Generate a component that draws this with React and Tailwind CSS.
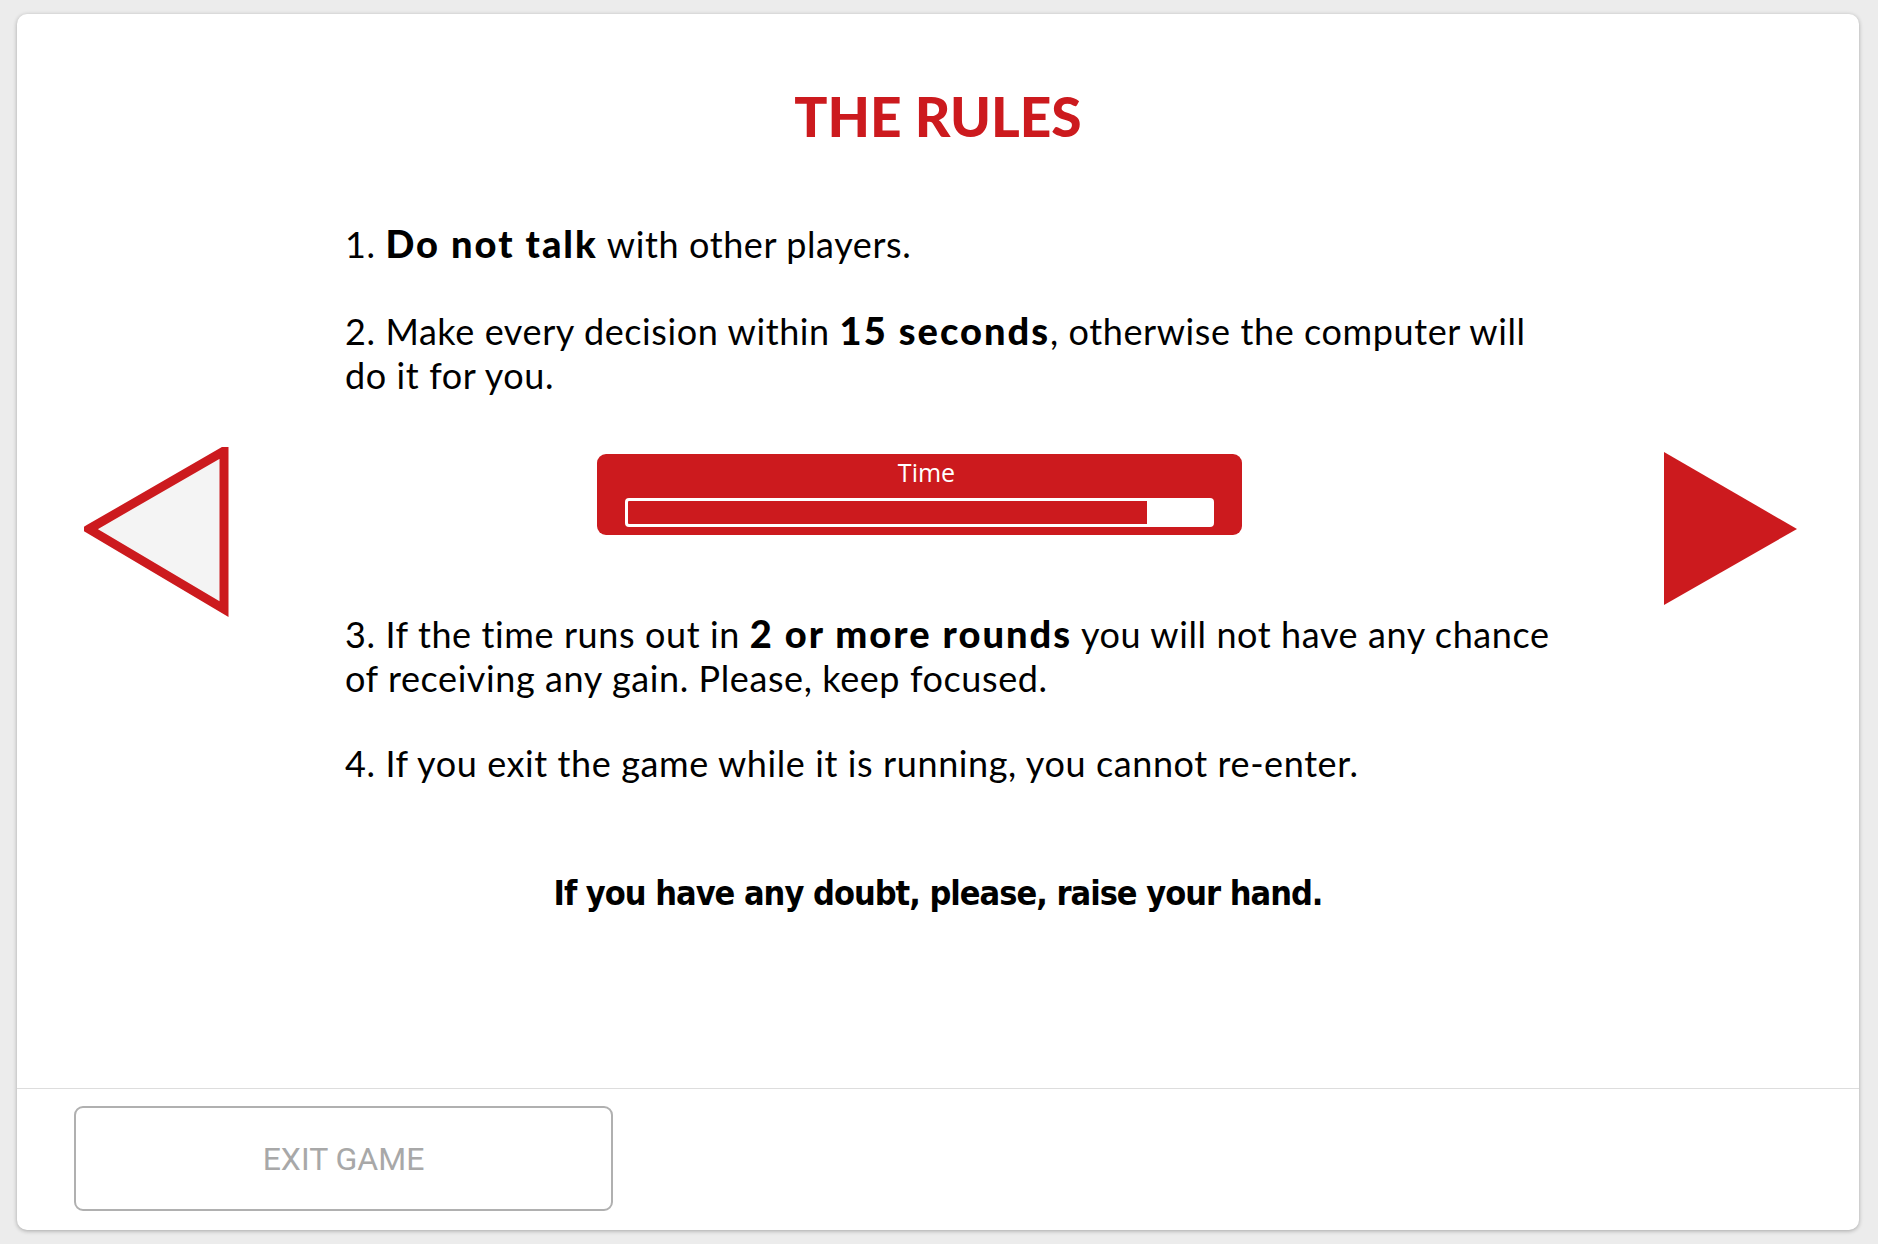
import React from 'react';

const RED = '#cc1a1e';

const LeftArrow = () => (
  <svg width="148" height="170" viewBox="0 0 148 170">
    <polygon points="5,82 140,4 140,162" fill="#f4f4f4" stroke={RED} strokeWidth="9" strokeLinejoin="miter" />
  </svg>
);

const RightArrow = () => (
  <svg width="134" height="154" viewBox="0 0 134 154">
    <polygon points="0,0 133,77 0,153" fill={RED} />
  </svg>
);

const TimeBox = ({ progress }) => (
  <div className="ml-[252px] w-[645px] h-[81px] rounded-[9px] bg-[#cc1a1e] px-[28px] pt-[5px]">
    <div className="text-center text-white text-[25px] leading-[26px] pl-[14px] tracking-normal font-['Open_Sans',sans-serif]">
      Time
    </div>
    <div className="mt-[13px] h-[29px] rounded-[4px] border-[3px] border-white bg-white">
      <div className="h-full bg-[#cc1a1e] rounded-l-[1px]" style={{ width: `${progress}%` }} />
    </div>
  </div>
);

const B = ({ children }) => <b className="font-black text-[38px] leading-none tracking-[2px]">{children}</b>;

export default function App() {
  return (
    <div className="min-h-screen bg-[#ececec] pl-[17px] pt-[14px] pb-[14px]">
      <div className="w-[1842px] h-[1216px] bg-white rounded-[10px] shadow-[0_1px_4px_rgba(0,0,0,0.3)] flex flex-col">
        <div className="flex-1 pt-[75px]">
          <h1 className="text-center text-[55px] leading-[55px] font-black text-[#cc1a1e] font-['Lato',sans-serif]">
            THE RULES
          </h1>

          <div className="flex mt-[78px]">
            <div className="w-[328px] pl-[67px] pt-[225px]">
              <LeftArrow />
            </div>

            <div className="w-[1215px] text-[36px] leading-[44px] tracking-[0.6px] text-black font-['Lato',sans-serif]">
              <p>
                1. <B>Do not talk</B> with other players.
              </p>
              <p className="mt-[43px]">
                2. Make every decision within <B>15 seconds</B>, otherwise the computer will do it for you.
              </p>
              <div className="mt-[57px]">
                <TimeBox progress={89} />
              </div>
              <p className="mt-[77px]">
                3. If the time runs out in <B>2 or more rounds</B> you will not have any chance of receiving any gain. Please, keep focused.
              </p>
              <p className="mt-[41px]">
                4. If you exit the game while it is running, you cannot re-enter.
              </p>
            </div>

            <div className="flex-1 flex justify-end pr-[61px] pt-[230px]">
              <RightArrow />
            </div>
          </div>

          <p className="mt-[86px] text-center text-[34px] leading-[44px] tracking-[-1px] font-bold text-black font-['DejaVu_Sans_Condensed','DejaVu_Sans',sans-serif]">
            If you have any doubt, please, raise your hand.
          </p>
        </div>

        <div className="h-[142px] border-t border-[#dddddd] pl-[57px] pt-[17px]">
          <button className="w-[539px] h-[105px] rounded-[9px] border-2 border-[#b0b0b0] bg-white text-[32px] text-[#a8a8a8] font-['Roboto',sans-serif]">
            EXIT GAME
          </button>
        </div>
      </div>
    </div>
  );
}
